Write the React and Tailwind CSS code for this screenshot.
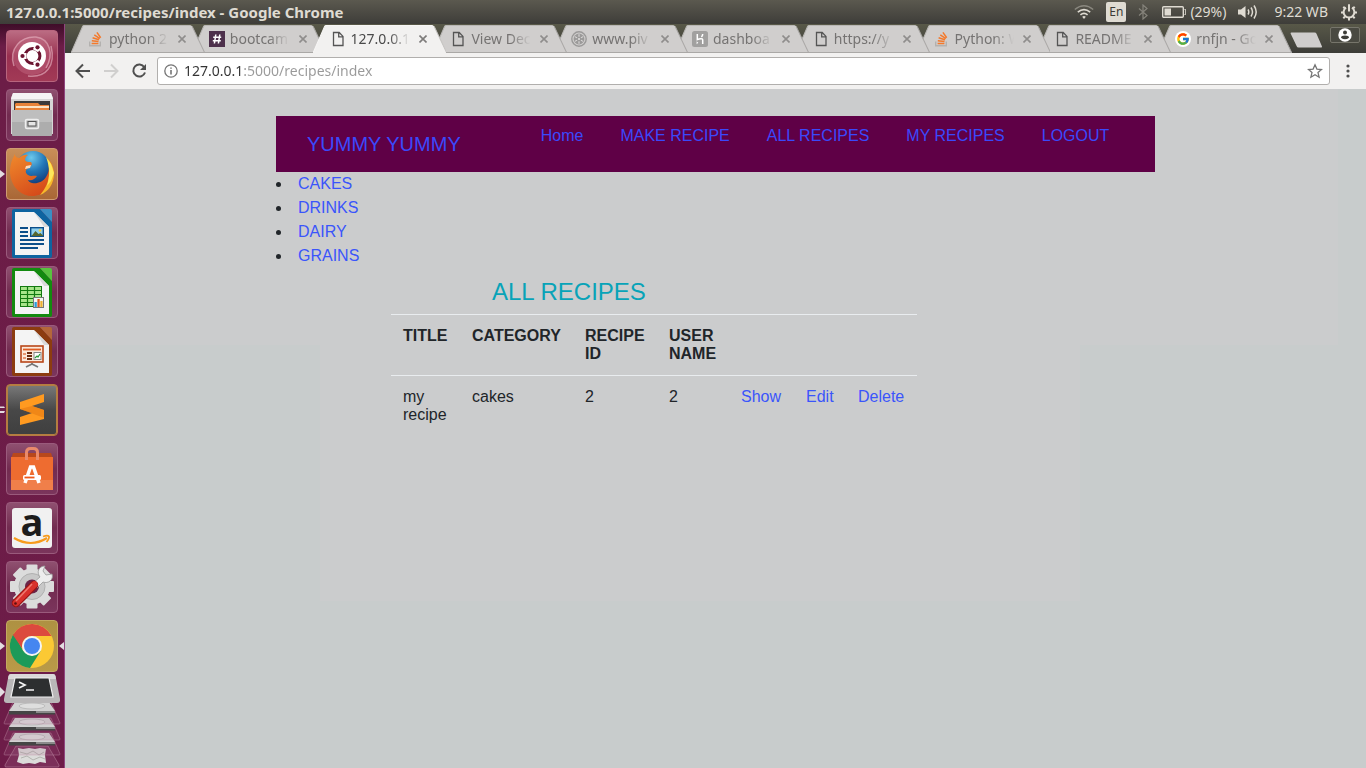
import React from "react";
import { FcGoogle } from "react-icons/fc";

/* ---------- small glyphs for tabs and toolbar ---------- */

const StackIcon = () => (
  <svg viewBox="0 0 16 16" className="size-4" aria-hidden="true">
    <path d="M1.700 10.500v4.200h10.600v-4.200" fill="none" stroke="#b3b1af" strokeWidth="1.400" />
    <g stroke="#f4792b" strokeWidth="1.500">
      <path d="M3.600 12.400h6.800M3.800 9.700l6.700.8M4.600 6.800l6.400 2M6.300 3.900l5.500 3.700M8.900 1.400l3.800 5.300" />
    </g>
  </svg>
);

const HashIcon = () => (
  <svg viewBox="0 0 16 16" className="size-4" aria-hidden="true">
    <rect width="16" height="16" fill="#4d304b" />
    <path d="M6.800 3.500l-1.400 9M10.800 3.500l-1.400 9M4.200 6.300h8M3.800 9.800h8" stroke="#fff" strokeWidth="1.500" />
  </svg>
);

const PageIcon = () => (
  <svg viewBox="0 0 16 16" className="size-4" aria-hidden="true">
    <path d="M3.500 1.500h5.700l3.800 3.900v9.100H3.500zM8.700 1.500v4.400H13" fill="none" stroke="#555" strokeWidth="1.300" />
  </svg>
);

const PivotIcon = () => (
  <svg viewBox="0 0 16 16" className="size-4" aria-hidden="true">
    <circle cx="8" cy="8" r="7.200" fill="none" stroke="#9b9a99" strokeWidth="1.400" />
    <circle cx="8" cy="8" r="5.400" fill="#9b9a99" />
    <g stroke="#dddbda" strokeWidth="1.100">
      <path d="M8 3.200v2.600M8 10.200v2.600M3.900 5.600l2.200 1.300M9.900 9.100l2.200 1.300M3.900 10.400l2.200-1.300M9.900 6.900l2.200-1.300" />
    </g>
    <circle cx="8" cy="8" r="1.100" fill="#dddbda" />
  </svg>
);

const HerokuIcon = () => (
  <svg viewBox="0 0 16 16" className="size-4" aria-hidden="true">
    <rect width="16" height="16" rx="2.500" fill="#a1a09f" />
    <path d="M5.300 3v5.600c2-1 5.400-1.700 5.400.5V13M10.700 3c0 1.300-.5 2.200-1.300 3" fill="none" stroke="#fff" strokeWidth="1.500" />
    <path d="M4.600 10.200v3l1.700-1.500z" fill="#fff" />
  </svg>
);

const GoogleIcon = () => (
  <span className="flex size-4 items-center justify-center rounded-full bg-white">
    <FcGoogle className="size-3.5" aria-hidden="true" />
  </span>
);

const tabs = [
  { label: "python 2", Icon: StackIcon },
  { label: "bootcam", Icon: HashIcon },
  { label: "127.0.0.1", Icon: PageIcon, active: true },
  { label: "View Dec", Icon: PageIcon },
  { label: "www.piv", Icon: PivotIcon },
  { label: "dashboa", Icon: HerokuIcon },
  { label: "https://y", Icon: PageIcon },
  { label: "Python: W", Icon: StackIcon },
  { label: "README", Icon: PageIcon },
  { label: "rnfjn - Go", Icon: GoogleIcon },
];

function Tab({ tab, index }) {
  const { Icon, active } = tab;
  return (
    <div
      className="relative flex h-full min-w-0 flex-1 items-center pr-[2px] pl-[17px]"
      style={{ zIndex: active ? 20 : 10 - index }}
    >
      <svg
        viewBox="0 0 133 29"
        preserveAspectRatio="none"
        className="absolute top-0 left-0 h-full w-[calc(100%+13px)]"
        aria-hidden="true"
      >
        <path
          d="M0 29L11.500 2.500Q12 1.500 13 1.500L119 1.500Q120 1.500 120.500 2.500L133 29Z"
          fill={active ? "#f2f1f0" : "#d0cecd"}
        />
        <path d="M120.500 2.500L133 29" fill="none" stroke={active ? "#c4c2c0" : "#aaa8a6"} />
        <path d="M0 29L11.500 2.500Q12 1.500 13 1.500H119" fill="none" stroke={active ? "#f7f6f5" : "#b9b7b5"} />
        {!active && <path d="M0 28.500H133" stroke="#aaa8a6" />}
      </svg>
      <button type="button" className="relative flex min-w-0 flex-1 items-center gap-[5px] overflow-hidden">
        <span className="shrink-0">
          <Icon />
        </span>
        <span
          className={
            "min-w-0 flex-1 overflow-hidden text-left text-sm leading-5 whitespace-nowrap [mask-image:linear-gradient(90deg,#000_60%,transparent_92%)] " +
            (active ? "text-[#4a4a4a]" : "text-[#757372]")
          }
        >
          {tab.label}
        </span>
      </button>
      <button type="button" aria-label="Close tab" className="relative flex size-4 shrink-0 items-center justify-center">
        <svg viewBox="0 0 8 8" className="size-2" aria-hidden="true">
          <path d="M.5.5l7 7M7.500.5l-7 7" stroke={active ? "#7d7b7a" : "#8f8d8c"} strokeWidth="1.600" />
        </svg>
      </button>
    </div>
  );
}

/* ---------- top panel ---------- */

function TopPanel() {
  return (
    <header className="flex h-6 items-center justify-between bg-linear-to-b from-[#5b594f] to-[#3e3d39] pr-2 pl-[6px] text-[#dfdbd2]">
      <h1 className="text-[15px] leading-6 font-bold">127.0.0.1:5000/recipes/index - Google Chrome</h1>
      <div className="flex items-center text-sm leading-6">
        <svg viewBox="0 0 20 16" className="mr-3 h-4 w-5" fill="none" aria-label="Wi-Fi">
          <path d="M.8 5.500Q10-1.800 19.200 5.500" stroke="#8a887f" strokeWidth="1.500" />
          <path d="M3.800 8.200Q10 3 16.200 8.200M6.400 10.800Q10 7.800 13.600 10.800" stroke="#dfdbd2" strokeWidth="1.600" />
          <path d="M8.200 12.700Q10 11.300 11.800 12.700L10 15z" fill="#dfdbd2" />
        </svg>
        <span className="mr-3 flex h-5 w-5 items-center justify-center rounded-[2px] bg-[#dfdbd2] text-xs text-[#3c3b37]">
          En
        </span>
        <svg viewBox="0 0 10 16" className="mr-[14px] h-4 w-[10px]" aria-label="Bluetooth">
          <path d="M1 4.500l8 7-4 3.500V1l4 3.500-8 7" fill="none" stroke="#85837b" strokeWidth="1.200" />
        </svg>
        <svg viewBox="0 0 24 12" className="mr-1 h-3 w-6" aria-label="Battery">
          <rect x=".7" y=".7" width="20.600" height="10.600" rx="1" fill="none" stroke="#dfdbd2" strokeWidth="1.400" />
          <rect x="2.500" y="2.500" width="6.500" height="7" fill="#dfdbd2" />
          <path d="M22.500 3.500h1.200v5h-1.200" stroke="#dfdbd2" fill="none" />
        </svg>
        <span className="mr-3">(29%)</span>
        <svg viewBox="0 0 20 16" className="mr-4 h-4 w-5" aria-label="Volume">
          <path d="M0 5.500h3L7.500 2v12L3 10.500H0z" fill="#dfdbd2" />
          <path d="M10 5.500q1.600 2.500 0 5M13 3.500q3 4.500 0 9M16 1.500q4.400 6.500 0 13" fill="none" stroke="#dfdbd2" strokeWidth="1.500" />
        </svg>
        <span className="mr-3">9:22 WB</span>
        <svg viewBox="0 0 18 18" className="h-[18px] w-[18px]" fill="none" stroke="#dfdbd2" aria-label="Session">
          <path d="M6 4.600a5.400 5.400 0 1 0 6 0" strokeWidth="2" />
          <path d="M9 1.200v7.300" strokeWidth="2" />
          <path d="M1 9.500h2M15 9.500h2M9 15v2.500M3.300 3.800l1.700 1.700M13 5.500l1.700-1.700M3.300 15.200L5 13.500M13 13.500l1.700 1.700" strokeWidth="2" />
        </svg>
      </div>
    </header>
  );
}

/* ---------- launcher ---------- */

const DocBase = ({ color, corner, children }) => (
  <>
    <path d="M8 2h26l12 13v34a2 2 0 0 1-2 2H8a2 2 0 0 1-2-2V4a2 2 0 0 1 2-2z" fill={color} />
    <path d="M9 5h19l15 15v28H9z" fill="#f4f4f4" />
    <path d="M28 5l15 15h-5z" fill="#d9d9d9" />
    <path d="M34 2h10a2 2 0 0 1 2 2v11z" fill={corner} />
    {children}
  </>
);

const art = {
  dash: (
    <>
      <circle cx="26" cy="26" r="19" fill="#d07c93" opacity=".35" />
      <path d="M8 36C2 18 16 6 30 7C44 9 48 24 40 38M22 46C40 48 50 36 45 16" fill="none" stroke="#eab8c4" strokeWidth="1.500" opacity=".6" />
      <circle cx="26" cy="26" r="14" fill="#fff" />
      <circle cx="26.500" cy="26" r="7.400" fill="none" stroke="#6b1430" strokeWidth="3" />
      <path d="M20.500 26L17 26M29.500 20.800l2-3.500M29.500 31.200l2 3.500" stroke="#fff" strokeWidth="6" />
      <g fill="#6b1430">
        <circle cx="16.500" cy="26" r="2.100" />
        <circle cx="31.500" cy="17.300" r="2.100" />
        <circle cx="31.500" cy="34.700" r="2.100" />
      </g>
    </>
  ),
  files: (
    <>
      <path d="M7 4h38l2 5v36H5V9z" fill="#d6d6d6" />
      <path d="M7 4h38l2 6H5z" fill="#f4f4f4" />
      <rect x="8" y="12" width="36" height="10" fill="#3a3a3a" />
      <path d="M10 14h22l2 2h9v6H9v-7z" fill="#e8833a" />
      <path d="M10 17h33v2H10z" fill="#fbe3c5" />
      <path d="M6 21h40v25a1 1 0 0 1-1 1H7a1 1 0 0 1-1-1z" fill="#adadad" />
      <path d="M6 21h40v12H6z" fill="#bebebe" />
      <rect x="19.500" y="30.500" width="13" height="9" rx="1.500" fill="#bbb" stroke="#eee" strokeWidth="1.500" />
      <rect x="22" y="32.500" width="8" height="4.500" fill="#e6e6e6" stroke="#555" />
    </>
  ),
  firefox: (
    <>
      <defs>
        <linearGradient id="fox" x1="0" y1="0" x2=".6" y2="1">
          <stop offset="0" stopColor="#f08a2c" />
          <stop offset="1" stopColor="#d54a1a" />
        </linearGradient>
        <radialGradient id="globe" cx=".45" cy=".2" r=".8">
          <stop offset="0" stopColor="#6cc8ec" />
          <stop offset=".5" stopColor="#2377b8" />
          <stop offset="1" stopColor="#123a78" />
        </radialGradient>
      </defs>
      <circle cx="27" cy="20" r="17" fill="url(#globe)" />
      <path
        d="M8 8C4 15 3 24 5 31 8 41 16 48 26 48 38 48 48 39 48 26c0-6-2-11-6-15 2 7 1 14-2 18-3 5-9 7-14 6-2-.5-4-2-4-3 4 1 7-1 9-4-3-1-6 1-9-1-3-2-3-5 0-7l3-2c1-1 1-3 0-4-3 0-5 0-6-2 0-2 1-4 3-5-4-1-7 1-9 3-2 0-3-1-5-4z"
        fill="url(#fox)"
      />
      <path d="M41 10c5 5 7 11 7 16 0 10-6 18-14 21 6-7 9-14 9-22 0-6 0-10-2-15z" fill="#f6b92c" />
      <path d="M40 9l5 7 3 9-3 8-4 5c3-9 3-19-1-29z" fill="#fde65a" />
      <path d="M20 18l5-1-1 3-5 1z" fill="#f9dcc0" />
    </>
  ),
  writer: (
    <DocBase color="#0e64a0" corner="#3a8fc4">
      <path d="M14 21h8M14 25h8M14 29h8M14 33h24M14 37h24M14 41h18" stroke="#0c4f8a" strokeWidth="2" />
      <rect x="24.700" y="20.700" width="12.600" height="8.600" fill="#8fd0ee" stroke="#0c4f8a" strokeWidth="1.400" />
      <path d="M25.500 29l4-5 3 3 2-1 3 3z" fill="#55662e" />
      <circle cx="34" cy="23.500" r="1.300" fill="#f5d040" />
    </DocBase>
  ),
  calc: (
    <DocBase color="#138a0f" corner="#58c33f">
      <rect x="14.500" y="20.500" width="21" height="20" fill="#a8e58a" stroke="#137a10" />
      <path d="M14.500 24.500h21M14.500 28.500h21M14.500 32.500h21M14.500 36.500h21M21.500 20.500v20M28.500 20.500v20" stroke="#137a10" strokeWidth="1.200" />
      <rect x="27.500" y="31.500" width="10" height="10" fill="#f4f4f4" stroke="#777" />
      <path d="M28.500 36h2.300v5h-2.300z" fill="#2c9bd8" />
      <path d="M31.400 33h2.300v8h-2.300z" fill="#e0561a" />
      <path d="M34.300 35h2.300v6h-2.300z" fill="#eeb131" />
    </DocBase>
  ),
  impress: (
    <DocBase color="#8c3c10" corner="#b4673a">
      <rect x="15" y="21" width="22" height="16" fill="#fce9da" stroke="#b8471a" strokeWidth="1.600" />
      <path d="M17 24.500h18" stroke="#df5c24" strokeWidth="1.800" />
      <path d="M17 29h3M17 33h3" stroke="#e8956f" strokeWidth="2" />
      <path d="M21 28h5M21 31h5M21 34h5" stroke="#6b2c10" strokeWidth="1.800" />
      <rect x="28" y="27.500" width="7" height="7" fill="#fff" stroke="#888" />
      <path d="M29 33l2-2 1 1 2-3" stroke="#2b9a3c" fill="none" strokeWidth="1.200" />
      <path d="M26 38v2M26 39l-6 3M26 39l6 3" stroke="#777" strokeWidth="1.800" />
    </DocBase>
  ),
  sublime: (
    <>
      <path d="M14 18L38 10v8l-12 4 12 4v9L14 41v-8l12-4-12-4z" fill="#ff9a20" />
      <path d="M14 25l12-3 12 4v7l-1 .5z" fill="#ea7f14" opacity=".7" />
    </>
  ),
  software: (
    <>
      <path d="M7 10h38l2 6H5z" fill="#b8481c" />
      <path d="M5 14h42v33H5z" fill="#ee6c30" />
      <path d="M5 37h42v10H5z" fill="#f07f4a" />
      <path d="M20.500 17V9.500q0-4 4-4h3q4 0 4 4V17" fill="none" stroke="#e98a6c" strokeWidth="3" />
      <path d="M19 40l5.500-16h3L33 40" fill="none" stroke="#fff" strokeWidth="3.500" />
      <rect x="17" y="32" width="18" height="5" rx="1.500" fill="#fff" />
      <path d="M18.500 34.500h10" stroke="#ee5a1c" strokeWidth="1.800" />
    </>
  ),
  amazon: (
    <>
      <rect x="6" y="6" width="40" height="40" rx="3" fill="#f1f1f1" />
      <path d="M8 36q17 10 33 0" fill="none" stroke="#f79b1c" strokeWidth="2.200" />
      <path d="M37 34.500q5-1.500 6 0 .5 2-2.500 5.500" fill="none" stroke="#f79b1c" strokeWidth="1.800" />
    </>
  ),
  settings: (
    <>
      <g fill="#dcdcdc">
        {[0, 45, 90, 135].map((a) => (
          <rect key={a} x="20.500" y="3.500" width="11" height="44" rx="1" transform={`rotate(${a} 26 25.500)`} />
        ))}
        <circle cx="26" cy="25.500" r="18" />
      </g>
      <circle cx="26" cy="25.500" r="13" fill="#c8c8c8" stroke="#b0b0b0" />
      <circle cx="26" cy="25.500" r="7" fill="#6a2448" />
      <path d="M27 22l7-6c-4-5-1-11 5-11l-2 5 3 4 6-1c2 6-4 10-9 8l-6 6z" fill="#ededed" stroke="#999" strokeWidth=".8" />
      <path d="M10 42L28 24" stroke="#971313" strokeWidth="8.500" strokeLinecap="round" />
      <path d="M10 42L28.500 23.500" stroke="#d8302c" strokeWidth="6.500" strokeLinecap="round" />
      <path d="M10 40L26 23" stroke="#ef7a70" strokeWidth="1.500" />
      <circle cx="9.500" cy="42.500" r="1.300" fill="#5c1010" />
    </>
  ),
  chrome: (
    <>
      <circle cx="26" cy="26" r="22" fill="#fbc934" />
      <path d="M6.900 15a22 22 0 0 0 17.100 33L34.700 31 26 36 17.300 31 8 14z" fill="#1c9a59" />
      <path d="M6.900 15A22 22 0 0 1 45.500 16H26a10 10 0 0 0-9.500 13z" fill="#dc4a3e" />
      <circle cx="26" cy="26" r="10" fill="#f4f4f4" />
      <circle cx="26" cy="26" r="8" fill="#4586f0" />
    </>
  ),
};

const plum = "border-[#9a5a7c] bg-linear-to-b from-[#8f5070] via-[#722b50] to-[#7b355c]";

const launchers = [
  { id: "dash", name: "Dash", tile: "border-[#b8657e] bg-linear-to-b from-[#bb6c83] via-[#982f50] to-[#a23a56]" },
  { id: "files", name: "Files", tile: plum },
  { id: "firefox", name: "Firefox", tile: "border-[#cf9b72] bg-linear-to-b from-[#c98f58] to-[#a96736]", pip: "one" },
  { id: "writer", name: "Writer", tile: plum },
  { id: "calc", name: "Calc", tile: plum },
  { id: "impress", name: "Impress", tile: plum },
  {
    id: "sublime",
    name: "Text editor",
    tile: "border-[#b57d41] inset-ring inset-ring-[#b57d41] bg-linear-to-b from-[#7a7a7a] via-[#484848] to-[#3f3f3f]",
    pip: "two",
  },
  { id: "software", name: "Software", tile: plum },
  { id: "amazon", name: "Amazon", tile: plum },
  { id: "settings", name: "Settings", tile: plum },
  { id: "chrome", name: "Chrome", tile: "border-[#c3a961] bg-linear-to-b from-[#ae9142] to-[#b99a48]", pip: "one", focused: true },
];

const Pip = ({ double }) => (
  <svg viewBox="0 0 5 10" className="absolute top-1/2 left-0 h-[10px] w-[5px] -translate-y-1/2" aria-hidden="true">
    <path d={double ? "M0 1.500h4l1 1.500H0zM0 6h5l-1 2H0z" : "M0 1l5 4-5 4z"} fill="#e3dde1" />
  </svg>
);

const Drive = ({ y }) => (
  <g>
    <path d={`M13 ${y}h38l9 21a1 1 0 0 1-1 1H5a1 1 0 0 1-1-1z`} fill="#a9698c" fillOpacity=".18" stroke="#c493ab" strokeOpacity=".5" strokeWidth=".8" />
    <path d={`M15 ${y}h34l6 9H9z`} fill="#d2d2d2" />
    <ellipse cx="32" cy={y + 4} rx="13" ry="3" fill="#dedede" stroke="#b5b5b5" strokeWidth=".8" />
    <path d={`M9 ${y + 9}h46v3.500H9z`} fill="#454545" />
    <path d={`M36 ${y + 9}h19v2H36z`} fill="#8a8a8a" />
  </g>
);

function Launcher() {
  return (
    <nav
      aria-label="Launcher"
      className="flex w-[65px] shrink-0 flex-col border-r border-[#90457f] bg-linear-to-b from-[#3f0d29] via-[#6c1d47] via-3% to-[#6d1c48] pt-[6px]"
    >
      <div className="flex flex-col gap-[7px]">
        {launchers.map((l) => (
          <div key={l.id} className="relative flex px-[6px]">
            {l.pip && <Pip double={l.pip === "two"} />}
            <button type="button" aria-label={l.name} className={"relative size-[52px] rounded-[4px] border " + l.tile}>
              <svg viewBox="0 0 52 52" className="absolute -top-px -left-px size-[52px]" aria-hidden="true">
                {art[l.id]}
              </svg>
              {l.id === "amazon" && (
                <span className="absolute inset-x-0 top-0 text-center font-['Open_Sans',sans-serif] text-[38px] leading-9 font-bold text-[#1c1c1c]">
                  a
                </span>
              )}
            </button>
            {l.focused && (
              <svg viewBox="0 0 5 10" className="absolute top-1/2 right-0 h-[10px] w-[5px] -translate-y-1/2" aria-hidden="true">
                <path d="M5 1L0 5l5 4z" fill="#e3dde1" />
              </svg>
            )}
          </div>
        ))}
      </div>
      <button type="button" aria-label="Terminal and drives" className="block">
        <svg viewBox="0 0 64 96" className="block h-24 w-16" aria-hidden="true">
          <path d="M16 74h32l11 19q.5 2-1 2H6q-1.500 0-1-2z" fill="#a9698c" fillOpacity=".25" stroke="#c493ab" strokeOpacity=".6" strokeWidth=".8" />
          <path d="M18 76l5 1 6-1 6 1 5-1 6 1-1 6 1 8-6-1-5 2-6-1-6 1-6-2 2-7z" fill="#dcdcda" />
          <path d="M20 80l7 2 6-3 6 4 5-3M21 86l6-2 6 4 7-3 5 2" stroke="#b4b4b0" fill="none" />
          <Drive y={61} />
          <Drive y={46} />
          <Drive y={30} />
          <path d="M11 2h42q2 0 2.500 2L60 27q.5 4-3 4H7q-3.500 0-3-4L8.500 4Q9 2 11 2z" fill="#b9b7b8" />
          <path d="M11 2h42q2 0 2.500 2L56 7H8L8.500 4Q9 2 11 2z" fill="#dad8d9" />
          <path d="M15 6h34l4 19H11z" fill="#2d2f30" stroke="#efefef" strokeWidth="1.200" />
          <path d="M19 10l6 3-6 3M26 18h8" fill="none" stroke="#f4f4f4" strokeWidth="1.700" />
          <path d="M0 15l5 5-5 5z" fill="#e3dde1" />
        </svg>
      </button>
    </nav>
  );
}

/* ---------- browser chrome ---------- */

function TabStrip() {
  return (
    <div className="flex h-[29px] bg-linear-to-b from-[#585848] to-[#3d3d38] px-[6px]">
      <div className="flex max-w-[1208px] flex-1">
        {tabs.map((t, i) => (
          <Tab key={t.label} tab={t} index={i} />
        ))}
      </div>
      <button type="button" aria-label="New tab" className="mt-2 ml-[11px] h-4 w-[33px]">
        <svg viewBox="0 0 33 16" className="block h-4 w-[33px]" aria-hidden="true">
          <path d="M1.500.5h23q1.500 0 2 1.200L32 14.500q.3 1-.8 1H8.500q-1.300 0-1.800-1.200L.6 1.500Q.3.5 1.500.5z" fill="#cfcdcc" />
        </svg>
      </button>
      <button
        type="button"
        aria-label="Profile"
        className="mt-[3px] ml-auto flex h-4 w-[30px] items-center justify-center rounded-[2px] border border-[#76756b] bg-[#4a4a42]"
      >
        <svg viewBox="0 0 14 14" className="size-3.5" aria-hidden="true">
          <circle cx="7" cy="7" r="6.700" fill="#fff" />
          <circle cx="7" cy="4.600" r="2" fill="#3d3d38" />
          <path d="M3 9.800q0-2.300 4-2.300t4 2.300q-4 3-8 0z" fill="#3d3d38" />
        </svg>
      </button>
    </div>
  );
}

function Toolbar() {
  return (
    <div className="flex h-9 items-center bg-[#f2f1f0] px-[10px]">
      <button type="button" aria-label="Back" className="mr-3 size-4">
        <svg viewBox="0 0 16 16" className="size-4" fill="none" stroke="#4f4f4f" strokeWidth="2" aria-hidden="true">
          <path d="M15 8H2M8 1.500L1.500 8 8 14.500" />
        </svg>
      </button>
      <button type="button" aria-label="Forward" className="mr-3 size-4">
        <svg viewBox="0 0 16 16" className="size-4" fill="none" stroke="#d0cfce" strokeWidth="2" aria-hidden="true">
          <path d="M1 8h13M8 1.500L14.500 8 8 14.500" />
        </svg>
      </button>
      <button type="button" aria-label="Reload" className="mr-[10px] size-4">
        <svg viewBox="0 0 16 16" className="size-4" aria-hidden="true">
          <path d="M13.300 4.200A6 6 0 1 0 14 9.500" fill="none" stroke="#4f4f4f" strokeWidth="2" />
          <path d="M15 1v6H9z" fill="#4f4f4f" />
        </svg>
      </button>
      <div className="flex h-7 min-w-0 flex-1 items-center rounded-[3px] border border-[#b1afad] bg-white px-[6px]">
        <svg viewBox="0 0 14 14" className="size-3.5 shrink-0" fill="none" stroke="#757575" strokeWidth="1.300" aria-hidden="true">
          <circle cx="7" cy="7" r="6.200" />
          <path d="M7 6v4.500M7 3.400v1.400" strokeWidth="1.600" />
        </svg>
        <input
          type="text"
          aria-label="Address"
          defaultValue="127.0.0.1:5000/recipes/index"
          className="ml-[6px] min-w-0 flex-1 bg-[linear-gradient(90deg,#333_60px,#999_60px)] bg-clip-text text-sm leading-6 text-transparent outline-none"
        />
        <button type="button" aria-label="Bookmark" className="size-4">
          <svg viewBox="0 0 16 16" className="size-4" fill="none" stroke="#757575" strokeWidth="1.300" aria-hidden="true">
            <path d="M8 1.800l1.900 4.300 4.600.4-3.500 3.100 1.100 4.600L8 11.800l-4.100 2.400L5 9.600 1.500 6.500l4.600-.4z" />
          </svg>
        </button>
      </div>
      <button type="button" aria-label="Menu" className="ml-[10px] size-4">
        <svg viewBox="0 0 16 16" className="size-4" fill="#4f4f4f" aria-hidden="true">
          <circle cx="8" cy="3" r="1.600" />
          <circle cx="8" cy="8" r="1.600" />
          <circle cx="8" cy="13" r="1.600" />
        </svg>
      </button>
    </div>
  );
}

/* ---------- recipes page ---------- */

const navLinks = ["Home", "MAKE RECIPE", "ALL RECIPES", "MY RECIPES", "LOGOUT"];
const categories = ["CAKES", "DRINKS", "DAIRY", "GRAINS"];
const recipes = [{ title: "my recipe", category: "cakes", id: 2, user: 2 }];

function RecipesPage() {
  return (
    <main className="flex-1 bg-[#c8cccc] pt-[27px] font-['Liberation_Sans',Arial,sans-serif] text-base text-[#212529] [background-image:linear-gradient(#cbcccd,#cbcccd),linear-gradient(#cbcccd,#cbcccd)] [background-position:0_0,255px_256px] bg-no-repeat [background-size:1273px_256px,760px_256px]">
      <div className="mx-auto max-w-[879px]">
        <nav className="flex h-14 items-start bg-[#5f0046] pt-2 pl-[31px] text-[#3a49fb]">
          <a href="#top" className="mr-20 py-[5px] text-xl leading-[30px]">
            YUMMY YUMMY
          </a>
          <ul className="flex gap-[37px]">
            {navLinks.map((n) => (
              <li key={n}>
                <a href="#top">{n}</a>
              </li>
            ))}
          </ul>
        </nav>
        <ul className="list-inside list-disc leading-6">
          {categories.map((c) => (
            <li key={c}>
              <a href="#top" className="text-[#3a55fb]">
                {c}
              </a>
            </li>
          ))}
        </ul>
        <section className="ml-[115px] max-w-[526px] pt-[9px]">
          <h2 className="ml-[101px] pb-[7px] text-2xl leading-[30px] text-[#08a3b8]">ALL RECIPES</h2>
          <table className="w-full table-fixed text-left align-top leading-[18px]">
            <colgroup>
              <col className="w-[69px]" />
              <col className="w-[113px]" />
              <col className="w-[84px]" />
              <col className="w-[72px]" />
              <col className="w-[65px]" />
              <col className="w-[52px]" />
              <col />
            </colgroup>
            <thead>
              <tr className="border-t border-[#e9ecef] align-top">
                {["TITLE", "CATEGORY", "RECIPE ID", "USER NAME"].map((h) => (
                  <th key={h} scope="col" className="p-3 font-bold">
                    {h}
                  </th>
                ))}
                <td colSpan={3} />
              </tr>
            </thead>
            <tbody>
              {recipes.map((r) => (
                <tr key={r.id} className="border-t border-[#e9ecef] align-top">
                  <td className="p-3">{r.title}</td>
                  <td className="p-3">{r.category}</td>
                  <td className="p-3">{r.id}</td>
                  <td className="p-3">{r.user}</td>
                  {["Show", "Edit", "Delete"].map((a) => (
                    <td key={a} className="p-3">
                      <a href="#top" className="text-[#3a55fb]">
                        {a}
                      </a>
                    </td>
                  ))}
                </tr>
              ))}
            </tbody>
          </table>
        </section>
      </div>
    </main>
  );
}

export default function App() {
  return (
    <div className="flex min-h-screen flex-col overflow-hidden font-['Noto_Sans',sans-serif]">
      <TopPanel />
      <div className="flex flex-1">
        <Launcher />
        <div className="flex min-w-0 flex-1 flex-col">
          <TabStrip />
          <Toolbar />
          <RecipesPage />
        </div>
      </div>
    </div>
  );
}
